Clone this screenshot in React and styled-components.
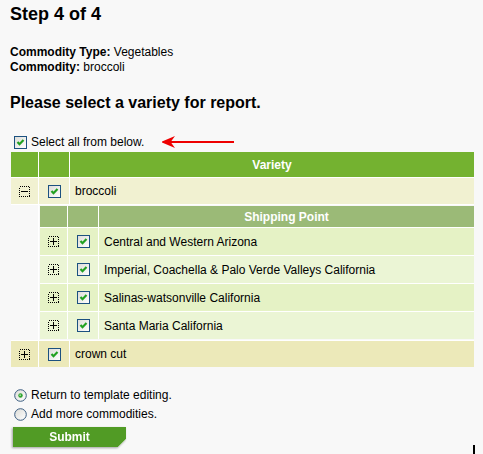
import React from "react";
import styled, { createGlobalStyle } from "styled-components";

const Global = createGlobalStyle`
  html, body { margin: 0; padding: 0; background: #f8f8f8; }
  body { font-family: "Liberation Sans", Arial, sans-serif; color: #000; }
`;

const Page = styled.div`
  padding: 4px 8px 0 10px;
  width: 483px;
  box-sizing: border-box;
`;

const Title = styled.h1`
  margin: 0;
  font-size: 18px;
  line-height: 21px;
  font-weight: bold;
`;

const Info = styled.div`
  margin-top: 20px;
  font-size: 12px;
  line-height: 15px;
  b { font-weight: bold; }
`;

const Heading = styled.h2`
  margin: 18px 0 0;
  font-size: 16px;
  line-height: 19px;
  font-weight: bold;
`;

const SelectRow = styled.label`
  margin-top: 24px;
  margin-left: 4px;
  display: flex;
  align-items: center;
  height: 13px;
  font-size: 12px;
  line-height: 13px;
  gap: 4px;
`;

const Arrow = styled.svg`
  margin-left: 14px;
  display: block;
`;

const Grid = styled.div`
  margin: 3px 0 0 1px;
  width: 463px;
  background: #fff;
  display: flex;
  flex-direction: column;
  gap: 1px;
`;

const Row = styled.div`
  display: grid;
  grid-template-columns: 27px 30px 1fr;
  column-gap: 1px;
  height: ${(p) => p.$h}px;
`;

const NestRow = styled.div`
  display: grid;
  grid-template-columns: 27px 1fr;
  column-gap: 1px;
`;

const Blank = styled.div`
  background: #f8f8f8;
`;

const NestWrap = styled.div`
  background: #f8f8f8;
  padding: 1px 0 1px 1px;
`;

const NestGrid = styled.div`
  background: #fff;
  display: flex;
  flex-direction: column;
  gap: 1px;
`;

const Cell = styled.div`
  background: ${(p) => p.$bg};
  display: flex;
  align-items: center;
  justify-content: ${(p) => (p.$center ? "center" : "flex-start")};
  padding: ${(p) => (p.$text ? "0 0 0 5px" : "0")};
  font-size: 12px;
  white-space: nowrap;
`;

const HeadCell = styled(Cell)`
  color: #fff;
  font-weight: bold;
  justify-content: center;
  padding: 0;
`;

const Options = styled.div`
  margin-top: 19px;
  margin-left: 4px;
  display: flex;
  flex-direction: column;
`;

const Option = styled.label`
  display: flex;
  align-items: center;
  height: 19px;
  gap: 4px;
  font-size: 12px;
  line-height: 19px;
`;

const ButtonRow = styled.div`
  margin-top: 3px;
  display: flex;
  justify-content: space-between;
  align-items: flex-start;
  padding-left: 3px;
`;

const ButtonShadow = styled.div`
  filter: drop-shadow(-1px 1px 1px rgba(0, 0, 0, 0.35));
`;

const Submit = styled.button`
  display: block;
  width: 113px;
  height: 20px;
  border: 0;
  padding: 0;
  background: linear-gradient(135deg, transparent calc(100% - 6px), #d8e8c8 calc(100% - 6px), #d8e8c8 calc(100% - 5px), transparent calc(100% - 5px)), #519b25;
  clip-path: polygon(0 0, 100% 0, 100% calc(100% - 8px), calc(100% - 8px) 100%, 0 100%);
  color: #fff;
  font-family: "Liberation Sans", Arial, sans-serif;
  font-weight: bold;
  font-size: 12px;
  cursor: pointer;
`;

const Caret = styled.span`
  display: block;
  width: 2px;
  height: 9px;
  background: #000;
  margin-top: 18px;
`;

const COLORS = {
  head: "#74b230",
  sub: "#9bba77",
  variety: "#f1f1d1",
  crown: "#ece9b9",
  rowA: "#e5f2c5",
  rowB: "#ebf5d5",
};

function CheckBox() {
  return (
    <svg width="13" height="13" viewBox="0 0 13 13" style={{ display: "block", flex: "none" }}>
      <defs>
        <linearGradient id="cbg" x1="0" y1="0" x2="1" y2="1">
          <stop offset="0" stopColor="#dcdcd7" />
          <stop offset="1" stopColor="#ffffff" />
        </linearGradient>
      </defs>
      <rect x="0.5" y="0.5" width="12" height="12" fill="url(#cbg)" stroke="#1c5180" shapeRendering="crispEdges" />
      <polyline points="3.5,6 5.5,8.2 9.5,4" fill="none" stroke="#21a121" strokeWidth="2.2" />
    </svg>
  );
}

function Radio({ checked }) {
  return (
    <svg width="13" height="13" viewBox="0 0 13 13" style={{ display: "block", flex: "none" }}>
      <defs>
        <linearGradient id="rbg" x1="0" y1="0" x2="1" y2="1">
          <stop offset="0" stopColor="#dcdcd7" />
          <stop offset="1" stopColor="#ffffff" />
        </linearGradient>
      </defs>
      <circle cx="6.5" cy="6.5" r="5.8" fill="url(#rbg)" stroke="#3a5c80" strokeWidth="1" />
      {checked && <circle cx="6.5" cy="6.5" r="2.2" fill="#2fa32f" />}
      {checked && <circle cx="6.2" cy="6.2" r="0.9" fill="#9be09b" />}
    </svg>
  );
}

function Toggle({ open }) {
  return (
    <svg width="11" height="11" viewBox="0 0 11 11" style={{ display: "block" }} shapeRendering="crispEdges">
      <rect x="0.5" y="0.5" width="10" height="10" fill="none" stroke="#000" strokeDasharray="1 1" />
      <line x1="2" y1="5.5" x2="9" y2="5.5" stroke="#000" />
      {!open && <line x1="5.5" y1="2" x2="5.5" y2="9" stroke="#000" />}
    </svg>
  );
}

const shipping = [
  "Central and Western Arizona",
  "Imperial, Coachella & Palo Verde Valleys California",
  "Salinas-watsonville California",
  "Santa Maria California",
];

export default function App() {
  return (
    <>
      <Global />
      <Page>
        <Title>Step 4 of 4</Title>
        <Info>
          <div><b>Commodity Type:</b> Vegetables</div>
          <div><b>Commodity:</b> broccoli</div>
        </Info>
        <Heading>Please select a variety for report.</Heading>
        <SelectRow>
          <CheckBox />
          <span>Select all from below.</span>
          <Arrow width="72" height="14" viewBox="0 0 72 14">
            <line x1="8" y1="6" x2="72" y2="6" stroke="#ee0000" strokeWidth="2" />
            <polygon points="0,5.5 13,0 9,5.5 9,6.5 13,12 0,6.5" fill="#ee0000" />
          </Arrow>
        </SelectRow>

        <Grid>
          <Row $h={25}>
            <Cell $bg={COLORS.head} />
            <Cell $bg={COLORS.head} />
            <HeadCell $bg={COLORS.head}>Variety</HeadCell>
          </Row>
          <Row $h={26}>
            <Cell $bg={COLORS.variety} $center><Toggle open /></Cell>
            <Cell $bg={COLORS.variety} $center><CheckBox /></Cell>
            <Cell $bg={COLORS.variety} $text>broccoli</Cell>
          </Row>
          <NestRow>
            <Blank />
            <NestWrap>
              <NestGrid>
                <Row $h={21}>
                  <Cell $bg={COLORS.sub} />
                  <Cell $bg={COLORS.sub} />
                  <HeadCell $bg={COLORS.sub}>Shipping Point</HeadCell>
                </Row>
                {shipping.map((s, i) => {
                  const bg = i % 2 === 0 ? COLORS.rowA : COLORS.rowB;
                  return (
                    <Row $h={27} key={s}>
                      <Cell $bg={bg} $center><Toggle /></Cell>
                      <Cell $bg={bg} $center><CheckBox /></Cell>
                      <Cell $bg={bg} $text>{s}</Cell>
                    </Row>
                  );
                })}
              </NestGrid>
            </NestWrap>
          </NestRow>
          <Row $h={26}>
            <Cell $bg={COLORS.crown} $center><Toggle /></Cell>
            <Cell $bg={COLORS.crown} $center><CheckBox /></Cell>
            <Cell $bg={COLORS.crown} $text>crown cut</Cell>
          </Row>
        </Grid>

        <Options>
          <Option><Radio checked /><span>Return to template editing.</span></Option>
          <Option><Radio /><span>Add more commodities.</span></Option>
        </Options>

        <ButtonRow>
          <ButtonShadow>
            <Submit type="button">Submit</Submit>
          </ButtonShadow>
          <Caret />
        </ButtonRow>
      </Page>
    </>
  );
}
